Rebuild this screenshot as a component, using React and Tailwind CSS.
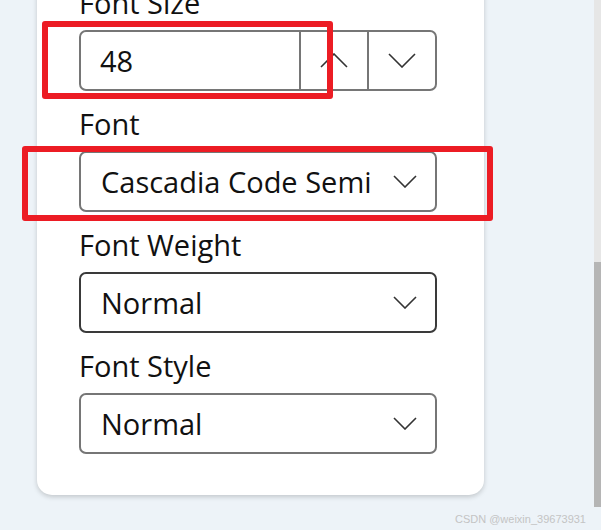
import React from "react";

const font = { fontFamily: '"Open Sans", "Noto Sans", sans-serif' };

function Chevron({ up = false, w = 22, h = 11, className = "" }) {
  return (
    <svg width={w + 2} height={h + 2} viewBox={`-1 -1 ${w + 2} ${h + 2}`} className={className}>
      <polyline
        points={up ? `0,${h} ${w / 2},0 ${w},${h}` : `0,0 ${w / 2},${h} ${w},0`}
        fill="none"
        stroke="#333"
        strokeWidth="1.6"
      />
    </svg>
  );
}

function Label({ children, first }) {
  return (
    <div className={`text-[29px] leading-[34px] text-[#111] mb-[10px] ${first ? "" : "mt-[16px]"}`}>
      {children}
    </div>
  );
}

function Select({ value, dark }) {
  return (
    <div
      className={`h-[61px] rounded-[7px] border-2 bg-white flex items-center pl-[20px] pr-[18px] ${
        dark ? "border-[#3a3a3a]" : "border-[#767676]"
      }`}
    >
      <span className="flex-1 text-[29px] text-[#111] whitespace-nowrap overflow-hidden">{value}</span>
      <Chevron />
    </div>
  );
}

export default function App() {
  return (
    <div className="relative h-[530px] w-[601px] overflow-hidden bg-[#edf3f8] flex" style={font}>
      <div className="flex-1 pl-[37px]">
        <div className="-mt-[30px] w-[447px] bg-white rounded-b-[15px] shadow-[0_2px_5px_rgba(0,0,0,0.18)] pt-[16px] pb-[41px] pl-[42px] pr-[47px]">
          <Label first>Font Size</Label>
          <div className="h-[61px] rounded-[7px] border-2 border-[#767676] bg-white flex">
            <div className="flex-1 flex items-center pl-[19px] text-[29px] text-[#111]">48</div>
            <div className="w-[68px] border-l-2 border-[#767676] flex items-center justify-center">
              <Chevron up w={26} h={13} />
            </div>
            <div className="w-[68px] border-l-2 border-[#767676] flex items-center justify-center">
              <Chevron w={26} h={13} />
            </div>
          </div>
          <Label>Font</Label>
          <Select value="Cascadia Code Semi" />
          <Label>Font Weight</Label>
          <Select value="Normal" dark />
          <Label>Font Style</Label>
          <Select value="Normal" />
        </div>
      </div>
      <div className="w-[7px] flex flex-col">
        <div className="h-[262px] bg-[#e6e6e6]" />
        <div className="h-[245px] bg-[#b5b5b5]" />
      </div>

      <div className="absolute left-[42px] top-[21px] w-[291px] h-[78px] border-[6px] border-[#ec1c24] rounded-[3px]" />
      <div className="absolute left-[22px] top-[146px] w-[471px] h-[75px] border-[6px] border-[#ec1c24] rounded-[3px]" />

      <div
        className="absolute right-[15px] bottom-[5px] text-[11px] leading-[12px] text-[#c4c4c4]"
        style={{ fontFamily: '"Liberation Sans", sans-serif' }}
      >
        CSDN @weixin_39673931
      </div>
    </div>
  );
}
